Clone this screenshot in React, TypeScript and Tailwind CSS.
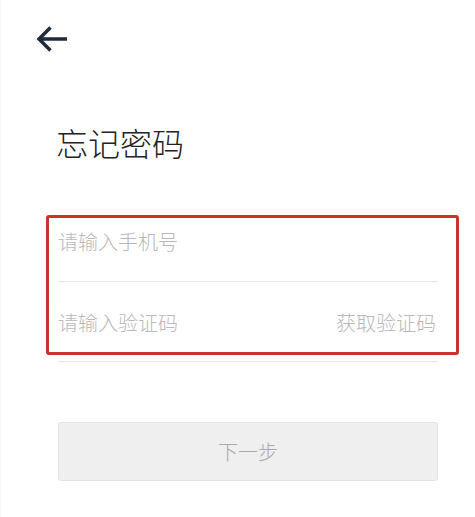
import { useState } from "react";

const cjk = { fontFamily: '"Noto Sans CJK SC", "Noto Sans", sans-serif' };

const BackArrow = () => (
  <svg width="34" height="30" viewBox="0 0 34 30" fill="none" aria-hidden>
    <path
      d="M4 15H32M15.5 3.5L4 15l11.5 11.5"
      stroke="#1f2b3a"
      strokeWidth="3.5"
      strokeLinecap="butt"
      strokeLinejoin="miter"
    />
  </svg>
);

export default function App() {
  const [phone, setPhone] = useState("");
  const [code, setCode] = useState("");

  const canSubmit = phone.trim().length > 0 && code.trim().length > 0;

  return (
    <div
      className="min-h-[517px] w-full border-l border-[#f7f7f7] bg-white"
      style={cjk}
    >
      <div className="pl-[34px] pt-[24px]">
        <button type="button" aria-label="返回" className="block">
          <BackArrow />
        </button>
      </div>

      <div className="px-[57px]">
        <h1 className="mt-[68px] -ml-[2px] text-[32px] leading-[40px] font-light text-[#222]">
          忘记密码
        </h1>

        <div className="relative mt-[40px] w-[380px]">
          <div className="flex h-[80px] items-center border-b border-[#e6e6e6]">
            <input
              value={phone}
              onChange={(event) => setPhone(event.target.value)}
              placeholder="请输入手机号"
              className="w-full bg-transparent text-[20px] font-light text-[#333] outline-none placeholder:text-[#b8b8b8]"
            />
          </div>
          <div className="flex h-[80px] items-center gap-3 border-b border-[#e6e6e6] pt-[3px]">
            <input
              value={code}
              onChange={(event) => setCode(event.target.value)}
              placeholder="请输入验证码"
              className="min-w-0 flex-1 bg-transparent text-[20px] font-light text-[#333] outline-none placeholder:text-[#b8b8b8]"
            />
            <button
              type="button"
              className="shrink-0 pr-[2px] text-[20px] font-light text-[#b8b8b8]"
            >
              获取验证码
            </button>
          </div>

          <div className="pointer-events-none absolute left-[-12px] top-[13px] h-[140px] w-[413px] rounded-[3px] border-[3px] border-[#c9332b]" />
        </div>

        <button
          type="button"
          disabled={!canSubmit}
          className="mt-[60px] flex h-[59px] w-[380px] items-center justify-center rounded-[3px] border border-[#e2e2e2] bg-[#efefef] text-[20px] font-light text-[#a9a9a9]"
        >
          下一步
        </button>
      </div>
    </div>
  );
}
